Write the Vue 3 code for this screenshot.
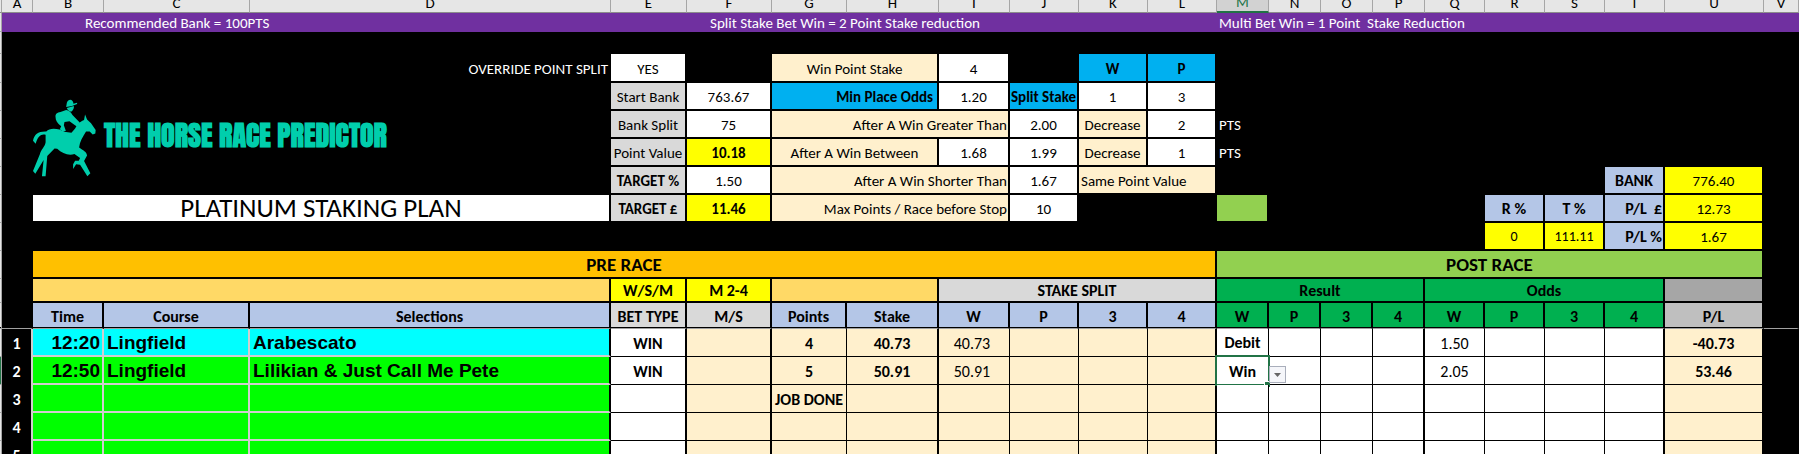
<template>
  <div class="sheet">
    <table>
      <colgroup>
        <col class="edge" />
        <col v-for="col in columns" :key="col" :class="'col-' + col" />
      </colgroup>

      <thead>
        <tr class="letters">
          <th class="strip"></th>
          <th v-for="col in columns" :key="col" :class="{ current: col === 'M' }">
            <div class="letter">{{ col }}</div>
          </th>
        </tr>
      </thead>

      <tbody>
        <tr v-for="(row, r) in topRows" :key="'top' + r" :class="row.size">
          <td class="strip"></td>
          <td
            v-for="(cell, c) in row.cells"
            :key="c"
            :colspan="cell.span || 1"
            :rowspan="cell.rows || 1"
            :class="cell.look"
          >
            <div v-if="cell.logo" class="logo">
              <svg viewBox="39 26 190 233" width="63" height="78" aria-hidden="true">
                <path
                  d="M140 43Q141 28 151 27Q160 28 161 39L172 36L172 40Q158 47 139 49Z"
                />
                <path d="M141 52L162 46Q164 56 154 63Q145 62 141 52Z" />
                <path
                  d="M107 79C106 69 112 66 122 64L139 58Q151 60 158 73L180 96L171 108L149 92L134 94L132 104L138 121L130 124L120 116L124 107C112 98 107 89 107 79Z"
                />
                <path
                  d="M39 151C43 131 55 122 79 123C87 114 101 112 119 117L133 124L155 127L166 114C172 102 178 94 193 88L196 72L202 87L214 98L228 118L227 129L219 132L210 123L199 123C189 139 180 153 178 171C190 180 201 184 202 195L193 212L212 249L203 258L181 223L169 222L160 236L160 222L166 211L177 211L181 203L164 191C146 197 127 189 112 175L104 174L82 197L77 258L66 258L71 209L46 250L39 242L60 191C63 177 75 169 77 155L77 133C66 128 53 136 47 160Z"
                />
              </svg>
              <span>THE HORSE RACE PREDICTOR</span>
            </div>
            <template v-else>{{ cell.text }}</template>
          </td>
        </tr>

        <tr v-for="(bet, i) in bets" :key="'bet' + i" class="row bet">
          <td class="strip" :class="{ active: i === 1 }"></td>
          <td class="number">{{ i + 1 }}</td>
          <td class="pick time" :class="{ first: i === 0 }">{{ bet.time }}</td>
          <td class="pick" :class="{ first: i === 0 }">{{ bet.course }}</td>
          <td class="pick last" :class="{ first: i === 0 }">{{ bet.selection }}</td>
          <td class="white bold thick">{{ bet.type }}</td>
          <td class="cream thick"></td>
          <td class="cream bold">{{ bet.points }}</td>
          <td class="cream bold thick">{{ bet.stake }}</td>
          <td class="cream split">{{ bet.stake }}</td>
          <td class="cream"></td>
          <td class="cream"></td>
          <td class="cream thick"></td>
          <td class="white bold result">
            <template v-if="i === 1">
              <select v-model="bet.result" class="picker" aria-label="Result">
                <option>Win</option>
                <option>Debit</option>
              </select>
              <button class="arrow" type="button" aria-label="Show results">
                <svg viewBox="0 0 7 4" width="7" height="4"><path d="M0 0H7L3.5 4Z" /></svg>
              </button>
              <span class="handle"></span>
            </template>
            <template v-else>{{ bet.result }}</template>
          </td>
          <td class="white"></td>
          <td class="white"></td>
          <td class="white thick"></td>
          <td class="white">{{ bet.odds }}</td>
          <td class="white"></td>
          <td class="white"></td>
          <td class="white thick"></td>
          <td class="cream bold thick">{{ bet.pl }}</td>
          <td class="void"></td>
        </tr>
      </tbody>
    </table>
  </div>
</template>

<script setup>
import { ref } from "vue";

const columns = "ABCDEFGHIJKLMNOPQRSTUV".split("");

const topRows = [
  {
    size: "banner",
    cells: [
      { look: "purple" },
      { text: "Recommended Bank = 100PTS", span: 3, look: "purple indent" },
      { text: "Split Stake Bet Win = 2 Point Stake reduction", span: 6, look: "purple" },
      { span: 2, look: "purple" },
      { text: "Multi Bet Win = 1 Point  Stake Reduction", span: 10, look: "purple left" },
    ],
  },
  { size: "spacer", cells: [{ span: 22 }] },
  {
    size: "tall",
    cells: [
      {},
      { text: "OVERRIDE POINT SPLIT", span: 3, look: "right" },
      { text: "YES", look: "white" },
      {},
      { text: "Win Point Stake", span: 2, look: "cream" },
      { text: "4", look: "white" },
      {},
      { text: "W", look: "blue bold" },
      { text: "P", look: "blue bold" },
      { span: 10 },
    ],
  },
  {
    size: "row",
    cells: [
      {},
      { logo: true, span: 3, rows: 4, look: "brand" },
      { text: "Start Bank", look: "grey" },
      { text: "763.67", look: "white" },
      { text: "Min Place Odds", span: 2, look: "blue bold right inset" },
      { text: "1.20", look: "white" },
      { text: "Split Stake", look: "blue bold" },
      { text: "1", look: "white" },
      { text: "3", look: "white" },
      { span: 10 },
    ],
  },
  {
    size: "row",
    cells: [
      {},
      { text: "Bank Split", look: "grey" },
      { text: "75", look: "white" },
      { text: "After A Win Greater Than", span: 3, look: "cream right" },
      { text: "2.00", look: "white" },
      { text: "Decrease", look: "cream" },
      { text: "2", look: "white" },
      { text: "PTS", look: "left" },
      { span: 9 },
    ],
  },
  {
    size: "row",
    cells: [
      {},
      { text: "Point Value", look: "grey" },
      { text: "10.18", look: "yellow bold" },
      { text: "After A Win Between", span: 2, look: "cream" },
      { text: "1.68", look: "white" },
      { text: "1.99", look: "white" },
      { text: "Decrease", look: "cream" },
      { text: "1", look: "white" },
      { text: "PTS", look: "left" },
      { span: 9 },
    ],
  },
  {
    size: "row",
    cells: [
      {},
      { text: "TARGET %", look: "grey bold" },
      { text: "1.50", look: "white" },
      { text: "After A Win Shorter Than", span: 3, look: "cream right" },
      { text: "1.67", look: "white" },
      { text: "Same Point Value", span: 2, look: "cream left" },
      { span: 7 },
      { text: "BANK", look: "steel bold" },
      { text: "776.40", look: "yellow" },
      {},
    ],
  },
  {
    size: "row",
    cells: [
      {},
      { text: "PLATINUM STAKING PLAN", span: 3, look: "white title" },
      { text: "TARGET £", look: "grey bold" },
      { text: "11.46", look: "yellow bold" },
      { text: "Max Points / Race before Stop", span: 3, look: "cream right" },
      { text: "10", look: "white" },
      { span: 2 },
      { look: "lime" },
      { span: 4 },
      { text: "R %", look: "steel bold" },
      { text: "T %", look: "steel bold" },
      { text: "P/L  £", look: "steel bold right" },
      { text: "12.73", look: "yellow" },
      {},
    ],
  },
  {
    size: "row",
    cells: [
      { span: 17 },
      { text: "0", look: "yellow snug" },
      { text: "111.11", look: "yellow snug" },
      { text: "P/L %", look: "steel bold right" },
      { text: "1.67", look: "yellow" },
      {},
    ],
  },
  {
    size: "row",
    cells: [
      {},
      { text: "PRE RACE", span: 11, look: "orange heading" },
      { text: "POST RACE", span: 9, look: "lime heading" },
      {},
    ],
  },
  {
    size: "group",
    cells: [
      {},
      { span: 3, look: "amber" },
      { text: "W/S/M", look: "yellow bold" },
      { text: "M 2-4", look: "yellow bold" },
      { span: 2, look: "amber" },
      { text: "STAKE SPLIT", span: 4, look: "grey bold" },
      { text: "Result", span: 4, look: "green bold" },
      { text: "Odds", span: 4, look: "green bold" },
      { look: "dark" },
      {},
    ],
  },
  {
    size: "names",
    cells: [
      {},
      { text: "Time", look: "steel bold" },
      { text: "Course", look: "steel bold" },
      { text: "Selections", look: "steel bold" },
      { text: "BET TYPE", look: "grey bold" },
      { text: "M/S", look: "grey bold" },
      { text: "Points", look: "steel bold" },
      { text: "Stake", look: "steel bold" },
      ...["W", "P", "3", "4"].map((text) => ({ text, look: "steel bold" })),
      ...["W", "P", "3", "4", "W", "P", "3", "4"].map((text) => ({ text, look: "green bold" })),
      { text: "P/L", look: "silver bold" },
      {},
    ],
  },
];

const bets = ref([
  {
    time: "12:20",
    course: "Lingfield",
    selection: "Arabescato",
    type: "WIN",
    points: "4",
    stake: "40.73",
    result: "Debit",
    odds: "1.50",
    pl: "-40.73",
  },
  {
    time: "12:50",
    course: "Lingfield",
    selection: "Lilikian & Just Call Me Pete",
    type: "WIN",
    points: "5",
    stake: "50.91",
    result: "Win",
    odds: "2.05",
    pl: "53.46",
  },
  { points: "JOB DONE" },
  {},
  {},
]);
</script>

<style>
body {
  margin: 0;
  background: #000;
}
</style>

<style scoped>
.sheet {
  height: 100vh;
  overflow: hidden;
  background: #000;
  font-family: Calibri, Carlito, Lato, sans-serif;
  font-size: 15px;
  line-height: 18px;
  color: #000;
}

table {
  width: 100%;
  table-layout: fixed;
  border-collapse: separate;
  border-spacing: 0;
}

.edge { width: 2px; }
.col-A { width: 31px; }
.col-B { width: 71px; }
.col-C { width: 146px; }
.col-E { width: 76px; }
.col-F { width: 85px; }
.col-G { width: 75px; }
.col-H { width: 92px; }
.col-I { width: 71px; }
.col-J, .col-K, .col-L { width: 69px; }
.col-M, .col-N, .col-O, .col-P { width: 52px; }
.col-Q, .col-R, .col-S, .col-T { width: 60px; }
.col-U { width: 99px; }
.col-V { width: 35px; }

th,
td {
  box-sizing: border-box;
  padding: 0;
  text-align: center;
  vertical-align: middle;
  white-space: pre;
}

td {
  padding-top: 2px;
  border: 0 solid #000;
  border-width: 0 2px 2px 0;
  color: #fff;
}

/* column letters, scrolled half out of view */
.letters th {
  height: 13px;
  background: #e6e6e6;
  border-right: 1px solid #a6a6a6;
  border-bottom: 1px solid #8c8c8c;
  font-weight: 400;
}

.letter {
  display: flex;
  align-items: flex-end;
  justify-content: center;
  height: 12px;
  overflow: hidden;
}

.letters .current {
  background: #d2d2d2;
  border-bottom: 2px solid #217346;
  color: #217346;
}

.current .letter { height: 11px; }

td.strip {
  background: #e6e6e6;
  border-width: 0 1px 1px 0;
  border-color: #a6a6a6;
}

td.strip.active { background: #217346; }

.banner { height: 19px; }
.banner td { padding-top: 1px; }
.spacer { height: 22px; }
.tall { height: 29px; }
.row { height: 28px; }
.group { height: 24px; }
.names { height: 26px; }

.group,
.names,
.bet {
  font-size: 16px;
}

.names td {
  border-bottom: 1px solid #a0a0a0;
  box-shadow: inset 0 -1px 0 #000;
}

.purple {
  background: #7030a0;
  border: 0;
}

.white, .cream, .blue, .grey, .yellow, .steel, .lime, .orange, .green, .silver {
  color: #000;
}

.white { background: #fff; }
.cream { background: #fff0cd; }
.blue { background: #00b0f0; }
.grey { background: #d9d9d9; }
.yellow { background: #ff0; }
.steel { background: #b4c6e7; font-size: 16px; }
.lime { background: #92d050; }
.orange { background: #ffc000; }
.amber { background: #ffd966; }
.green { background: #00b050; }
.dark { background: #a6a6a6; }
.silver { background: #bfbfbf; }

.bold { font-weight: 700; }
.snug { font-size: 14px; }
.heading { font-size: 19px; font-weight: 700; }

.title {
  padding-top: 0;
  font-size: 27px;
  line-height: 26px;
}

.left {
  text-align: left;
  padding-left: 2px;
}

.right {
  text-align: right;
  padding-right: 1px;
}

.inset { padding-right: 4px; }

.banner .indent {
  text-align: left;
  padding-left: 52px;
}

.brand {
  padding-top: 0;
  text-align: left;
}

.logo {
  display: flex;
  align-items: center;
  gap: 8px;
  color: #00ceac;
  font-family: Anton, Impact, "Roboto Condensed", Carlito, sans-serif;
  font-size: 28px;
  font-weight: 700;
}

.logo svg { fill: #00ceac; }
.logo span { padding-bottom: 6px; }

.bet td { border-width: 0 1px 1px 0; }
.bet td.thick { border-right-width: 2px; }

.bet td.number {
  border-width: 0 2px 0 0;
  border-color: #d0cece;
  font-weight: 700;
}

.bet td.pick {
  padding-left: 3px;
  border-width: 0 2px 2px 0;
  border-color: #d0cece;
  background: #0f0;
  color: #000;
  font-family: "Liberation Sans", Arial, sans-serif;
  font-size: 19px;
  font-weight: 700;
  text-align: left;
}

.bet td.first { background: #0ff; }
.bet td.last { border-right-color: #000; }

.bet td.time {
  padding-right: 2px;
  text-align: right;
}

.bet td.split { padding-right: 4px; }
.bet td.void { border: 0; }

td.result {
  position: relative;
  padding-top: 0;
}

.picker {
  display: block;
  width: 100%;
  height: 27px;
  padding: 2px 0 0;
  border: 0;
  border-radius: 0;
  outline: 2px solid #217346;
  background: #fff;
  color: #000;
  font: inherit;
  text-align: center;
  text-align-last: center;
  appearance: none;
}

.arrow {
  position: absolute;
  z-index: 1;
  left: 52px;
  bottom: 1px;
  display: flex;
  align-items: center;
  justify-content: center;
  width: 17px;
  height: 17px;
  padding: 0;
  border: 1px solid #a9aebb;
  background: #f5f6fa;
}

.arrow svg { fill: #666; }

.handle {
  position: absolute;
  right: -2px;
  bottom: -3px;
  width: 5px;
  height: 5px;
  background: #217346;
  box-shadow: -1px -1px 0 #fff;
}
</style>
